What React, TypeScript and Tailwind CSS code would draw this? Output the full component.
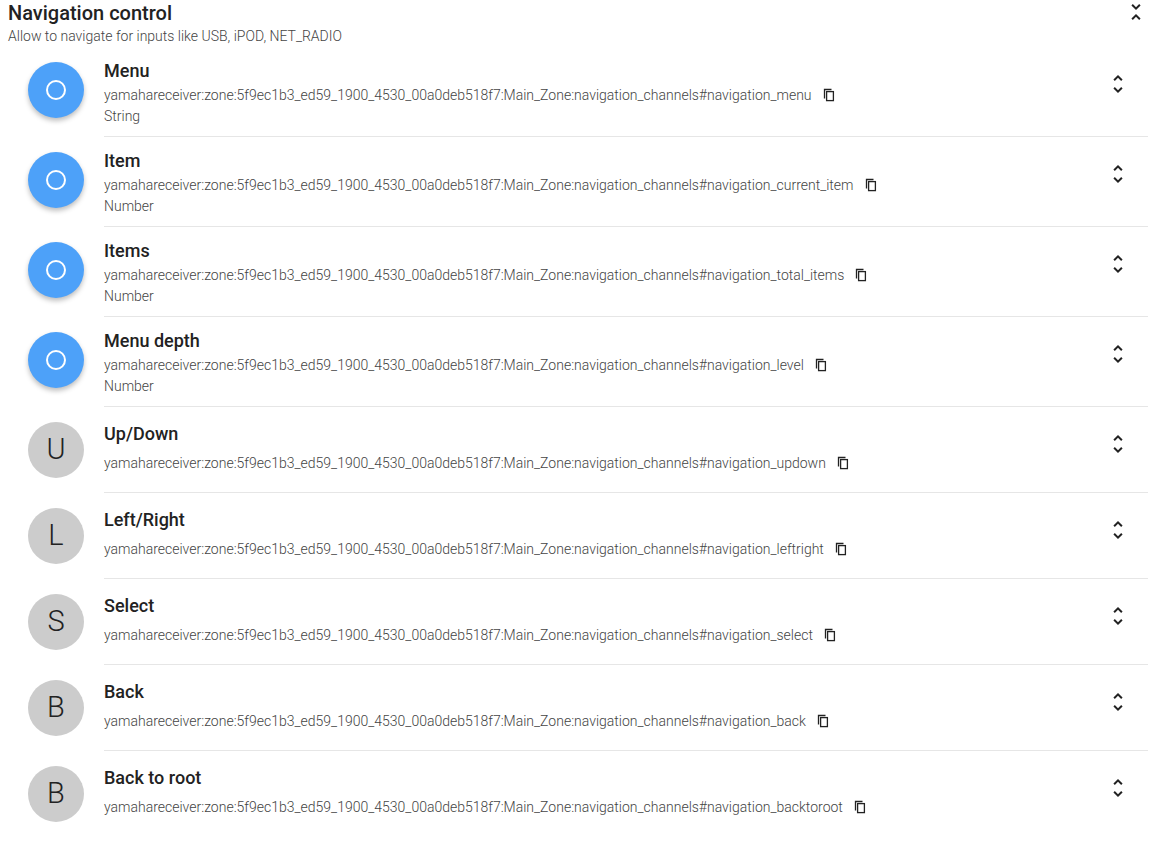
const PREFIX = "yamahareceiver:zone:5f9ec1b3_ed59_1900_4530_00a0deb518f7:Main_Zone:navigation_channels#";

type Channel = {
  label: string;
  id: string;
  type?: string;
  letter?: string;
};

const channels: Channel[] = [
  { label: "Menu", id: "navigation_menu", type: "String" },
  { label: "Item", id: "navigation_current_item", type: "Number" },
  { label: "Items", id: "navigation_total_items", type: "Number" },
  { label: "Menu depth", id: "navigation_level", type: "Number" },
  { label: "Up/Down", id: "navigation_updown", letter: "U" },
  { label: "Left/Right", id: "navigation_leftright", letter: "L" },
  { label: "Select", id: "navigation_select", letter: "S" },
  { label: "Back", id: "navigation_back", letter: "B" },
  { label: "Back to root", id: "navigation_backtoroot", letter: "B" },
];

const UnfoldMore = () => (
  <svg width="24" height="24" viewBox="0 0 24 24" fill="#222">
    <path d="M12 5.83L15.17 9l1.41-1.41L12 3 7.41 7.59 8.83 9 12 5.83zm0 12.34L8.83 15l-1.41 1.41L12 21l4.59-4.59L15.17 15 12 18.17z" />
  </svg>
);

const UnfoldLess = () => (
  <svg width="24" height="24" viewBox="0 0 24 24" fill="#222">
    <path d="M7.41 18.59L8.83 20 12 16.83 15.17 20l1.41-1.41L12 14l-4.59 4.59zm9.18-13.18L15.17 4 12 7.17 8.83 4 7.41 5.41 12 10l4.59-4.59z" />
  </svg>
);

// outlined copy glyph, thinner than the filled material one
const CopyIcon = () => (
  <svg width="14" height="14" viewBox="0 0 14 14" fill="none" stroke="#222" strokeWidth="1.3">
    <path d="M2.5 10.5V1.5h7" />
    <rect x="4.6" y="3.6" width="6.8" height="9" />
  </svg>
);

function Avatar({ c }: { c: Channel }) {
  if (c.type) {
    return (
      <div className="w-14 h-14 shrink-0 rounded-full bg-[#4da1f9] shadow-[0_3px_5px_rgba(0,0,0,0.25)] flex items-center justify-center">
        <div className="w-[20px] h-[20px] rounded-full border-[2.5px] border-white" />
      </div>
    );
  }
  return (
    <div className="w-14 h-14 shrink-0 rounded-full bg-[#cccccc] flex items-center justify-center text-[29px] font-light text-[#222]">
      {c.letter}
    </div>
  );
}

export default function App() {
  return (
    <div className="w-full bg-white font-['Roboto',sans-serif] text-[#222]">
      <div className="flex justify-between pl-2 pr-[3px]">
        <div>
          <h1 className="text-[20px] leading-[26px] font-medium">Navigation control</h1>
          <p className="text-[14px] leading-[21px] font-light text-[#444]">Allow to navigate for inputs like USB, iPOD, NET_RADIO</p>
        </div>
        <button className="w-6 h-6">
          <UnfoldLess />
        </button>
      </div>

      <ul>
        {channels.map((c, i) => (
          <li key={i} className="flex pl-[28px]">
            <div className="mt-[15px]">
              <Avatar c={c} />
            </div>
            <div
              className={
                "flex-1 ml-5 mr-[3px] flex " +
                (c.type ? "h-[90px] " : "h-[86px] ") +
                (i < channels.length - 1 ? "border-b border-[#e6e6e6]" : "")
              }
            >
              <div className={"flex-1 flex flex-col " + (c.type ? "pt-[14px]" : "pt-[17px]")}>
                <div className="text-[18px] leading-[20px] font-medium">{c.label}</div>
                <div className={"flex items-center text-[14px] leading-[20px] font-light text-[#444] " + (c.type ? "mt-1" : "mt-[9px]")}>
                  <span>{PREFIX + c.id}</span>
                  <span className="ml-[10px]">
                    <CopyIcon />
                  </span>
                </div>
                {c.type && <div className="text-[14px] leading-[20px] font-light text-[#444] mt-px">{c.type}</div>}
              </div>
              <div className="mt-[25px] mr-[18px]">
                <UnfoldMore />
              </div>
            </div>
          </li>
        ))}
      </ul>
    </div>
  );
}
